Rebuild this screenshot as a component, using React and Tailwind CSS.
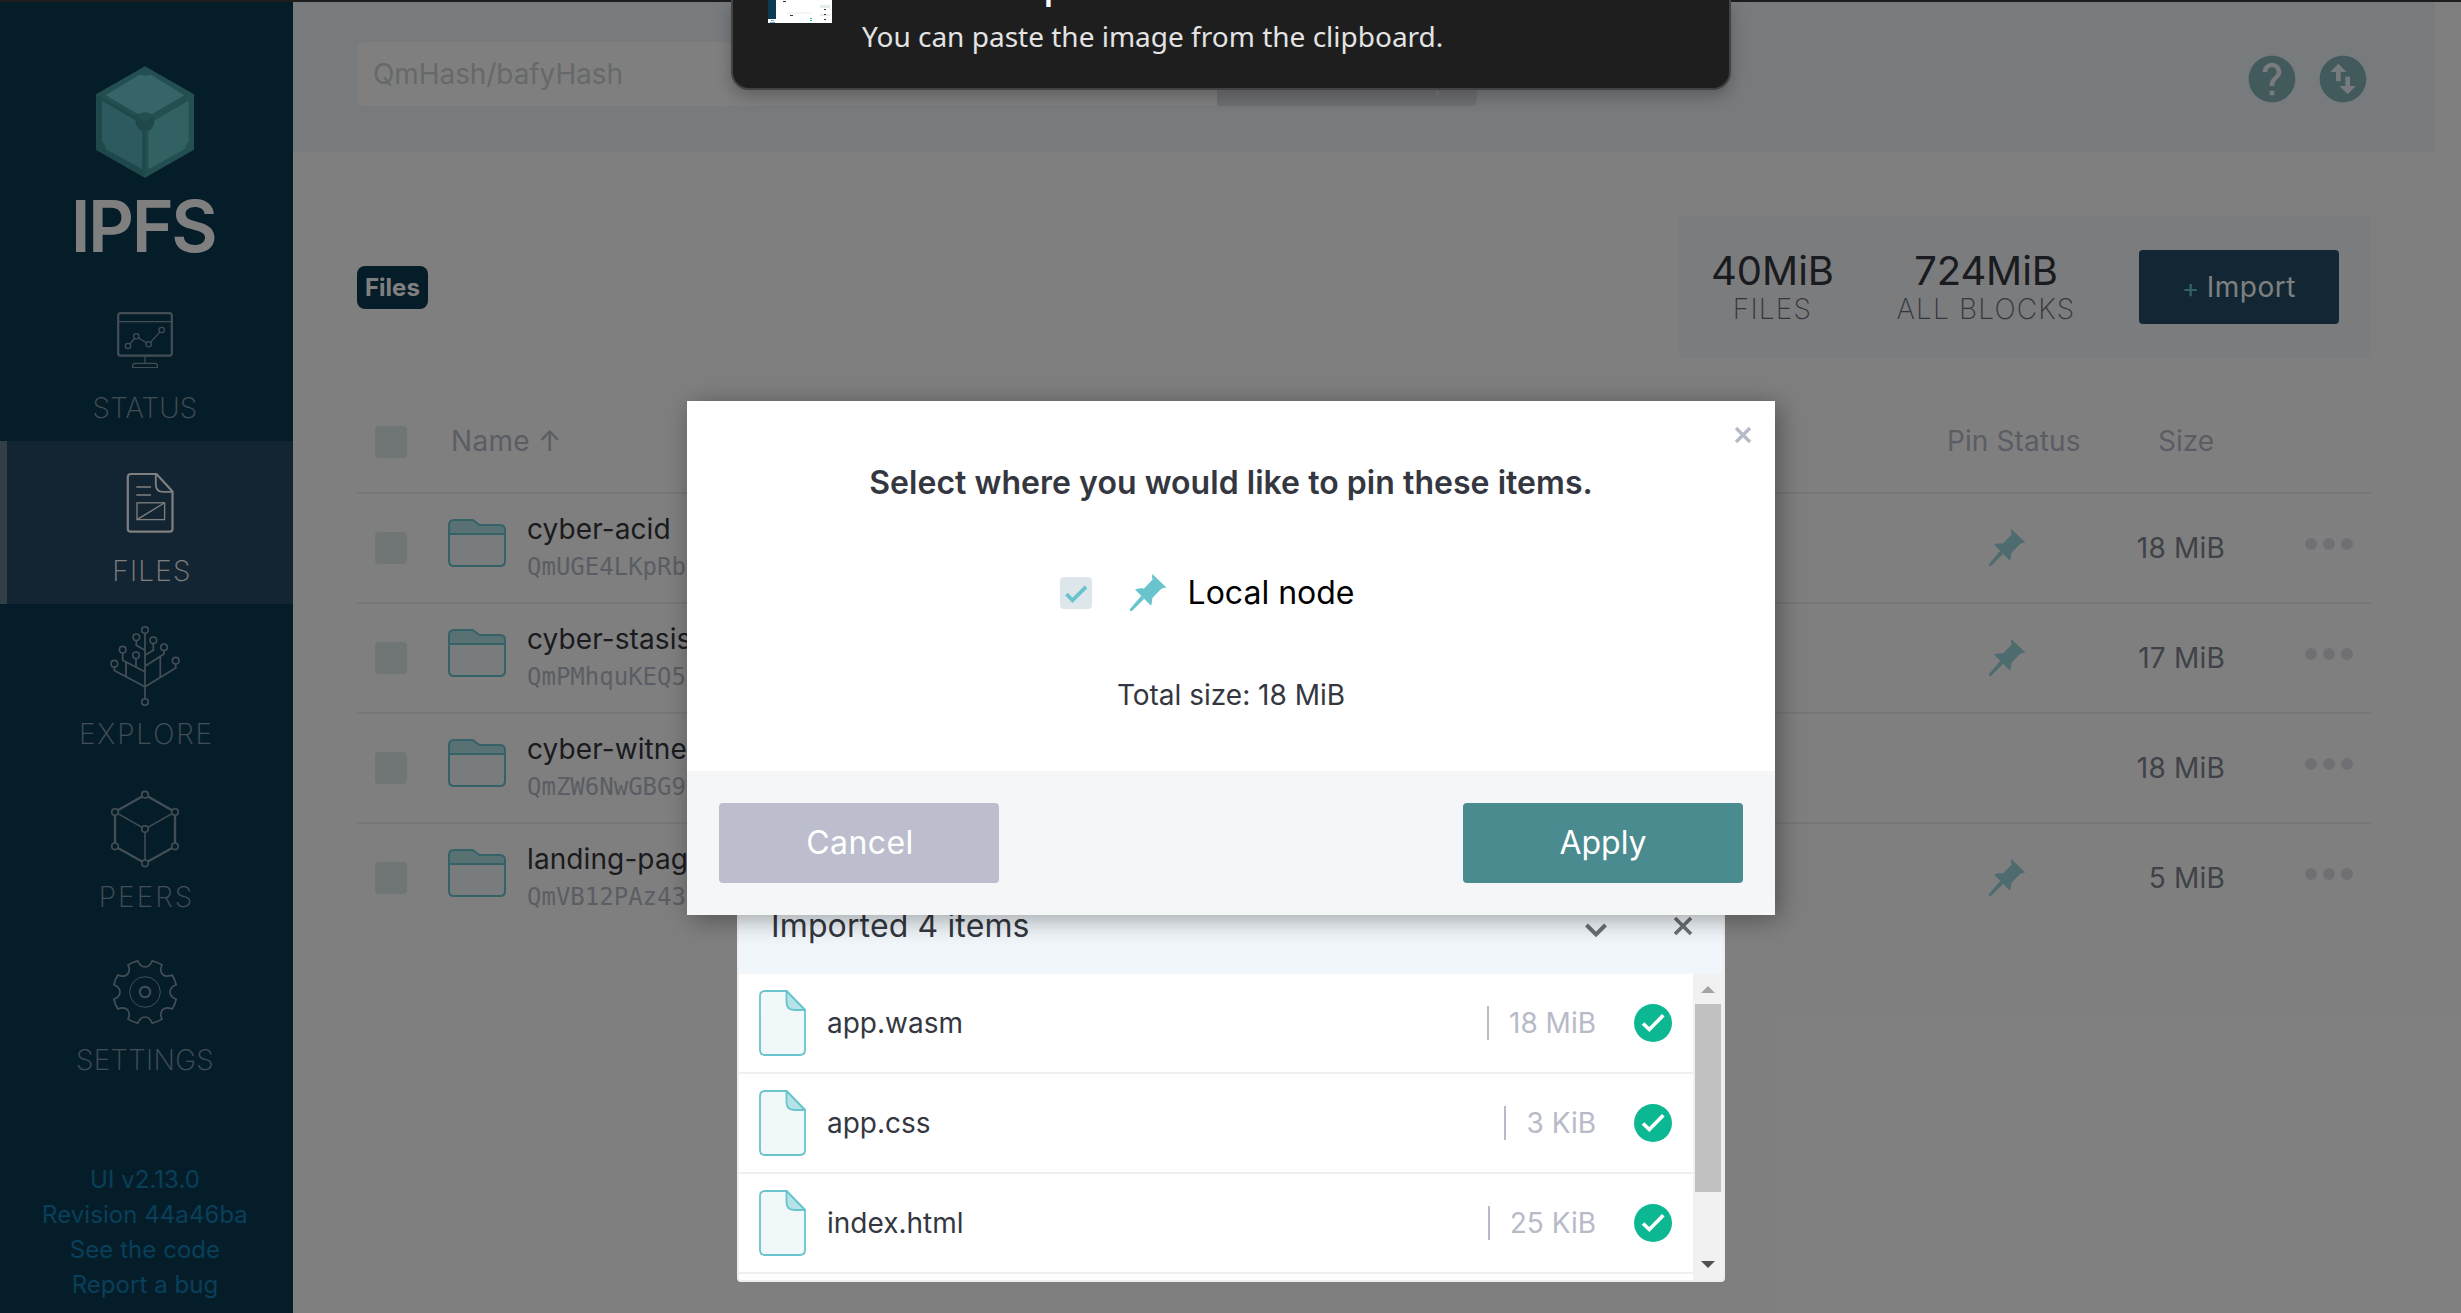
import React from "react";
import { MdHelp, MdSwapVerticalCircle } from "react-icons/md";

const GEAR = (() => {
  const pt = (deg, r) => {
    const a = (deg * Math.PI) / 180;
    return `${(50 + r * Math.sin(a)).toFixed(2)} ${(50 - r * Math.cos(a)).toFixed(2)}`;
  };
  let d = `M${pt(-13, 32)}`;
  for (let k = 0; k < 8; k++) {
    const a = k * 45;
    d += `Q${pt(a - 11, 25.5)} ${pt(a, 25)}Q${pt(a + 11, 25.5)} ${pt(a + 13, 32)}A32 32 0 0 1 ${pt(a + 32, 32)}`;
  }
  return d + "Z";
})();

const iconProps = { viewBox: "0 0 100 100", width: 100, height: 100, fill: "none", stroke: "currentColor" };

function StatusIcon() {
  return (
    <svg {...iconProps} strokeWidth="1.2">
      <rect x="23.2" y="23.1" width="53.6" height="42.6" rx="2.5" strokeWidth="2.2" />
      <path d="M24 31.6H76M50 66.5V73M37.6 77.5V76Q37.6 73.4 40.2 73.4H59.8Q62.4 73.4 62.4 76V77.5Z" />
      <path d="M35 54L39.5 48.5M43.7 48L51.4 52.7M55.6 52.2L64.9 42.2" />
      <circle cx="33" cy="56" r="2.7" />
      <circle cx="41.3" cy="46.3" r="2.7" />
      <circle cx="53.7" cy="54.3" r="2.7" />
      <circle cx="66.7" cy="40" r="2.7" />
    </svg>
  );
}

function FilesIcon() {
  return (
    <svg {...iconProps} strokeWidth="1.3">
      <path d="M55.5 21H29.8Q26.8 21 26.8 24V75.7Q26.8 78.7 29.8 78.7H68.5Q71.5 78.7 71.5 75.7V38.5Z" strokeWidth="2.2" />
      <path d="M54.8 21.5V31.5Q54.8 38.8 62 38.8H71.5" strokeWidth="1.8" />
      <path d="M35.3 34H50M35.3 42H50" />
      <rect x="36" y="49.8" width="27.6" height="16.8" />
      <path d="M36 66.6L63.6 49.8" />
    </svg>
  );
}

const TREE_NODES = [[50, 14], [41.3, 21.3], [58.3, 24.3], [27.7, 33.7], [69, 31.3], [41, 39.3], [19.3, 47.7], [80.7, 44.7], [50, 86]];

function ExploreIcon() {
  return (
    <svg {...iconProps} strokeWidth="1.7">
      <path d="M50 17.4V82.6M41.3 24.7V29.2L50 34.2M58.3 27.7V34.3L50 39.3M27.7 37.1V44.2L50 55.7M69 34.7V38L50 50.2M41 42.7V51M19.3 51.1V54.4L50 70.7L80.7 51.9V48.1M31 45.8V60.4M65.3 40.4V61" />
      {TREE_NODES.map(([x, y]) => (
        <circle key={`${x}-${y}`} cx={x} cy={y} r="3.3" strokeWidth="1.6" />
      ))}
    </svg>
  );
}

const CUBE_NODES = [[50, 15.7], [20, 33], [80, 33], [50, 50], [20, 67.3], [80, 67.3], [50, 84.3]];

function PeersIcon() {
  return (
    <svg {...iconProps}>
      <path d="M47.1 17.4L22.9 31.3M52.9 17.4L77.1 31.3M20 36.4V63.9M80 36.4V63.9M22.9 69L47.1 82.6M77.1 69L52.9 82.6" strokeWidth="2.3" />
      <path d="M22.9 34.7L47.1 48.3M77.1 34.7L52.9 48.3M50 53.4V80.9" strokeWidth="1.5" />
      {CUBE_NODES.map(([x, y]) => (
        <circle key={`${x}-${y}`} cx={x} cy={y} r="3.3" strokeWidth="1.6" />
      ))}
    </svg>
  );
}

function SettingsIcon() {
  return (
    <svg {...iconProps}>
      <path d={GEAR} strokeWidth="1.7" strokeLinejoin="round" />
      <circle cx="50" cy="50" r="15.3" strokeWidth="1" />
      <circle cx="50" cy="50" r="5.2" strokeWidth="2" />
    </svg>
  );
}

function Logo() {
  return (
    <svg viewBox="288 198 294 335" width="98" height="112">
      <path fill="#469ea2" d="M435 198L582 282V449L435 533L288 449V282Z" />
      <path fill="#3e9095" d="M288 282L435 365V533L288 449Z" />
      <path fill="#6acad1" d="M418 224Q435 229 452 224L553 285L455 342Q435 332 415 342L317 285Z" />
      <path fill="#5bb5bf" d="M306 302L407 361Q407 386 427 392V507L318 447Q317 434 306 425Z" />
      <path fill="#64c2c6" d="M566 302L463 361Q463 386 445 392V507L554 447Q555 434 566 425Z" />
      <circle cx="435" cy="365" r="28" fill="#3e9095" />
      <path fill="#469ea2" d="M411 351Q435 326 459 351L435 365Z" />
    </svg>
  );
}

const NAV = [
  { label: "STATUS", Icon: StatusIcon, text: "tracking-[0.15px]" },
  { label: "FILES", Icon: FilesIcon, text: "tracking-[1.2px] pl-0.5", active: true },
  { label: "EXPLORE", Icon: ExploreIcon, text: "tracking-[1.9px] pl-[3px]" },
  { label: "PEERS", Icon: PeersIcon, text: "tracking-[2.1px] pl-[3px]" },
  { label: "SETTINGS", Icon: SettingsIcon, text: "tracking-[0.3px]" },
];

function Sidebar() {
  return (
    <aside className="flex h-full w-[293px] shrink-0 flex-col bg-[#0b3a53] text-white">
      <div className="flex h-[276px] flex-col items-center pr-[3px] pt-16">
        <Logo />
        <div className="mt-[6px] pr-1 text-[71.5px] leading-[84px] font-semibold tracking-[-2.5px]">IPFS</div>
      </div>
      <nav>
        {NAV.map(({ label, Icon, text, active }) => (
          <div
            key={label}
            className={
              active
                ? "flex h-[163px] flex-col items-center border-l-[7px] border-[#657e8c] bg-[#264b66] pt-3 pl-0.5"
                : "flex h-[163px] flex-col items-center pt-3 pr-[3px]"
            }
          >
            <div className={active ? "flex flex-col items-center" : "flex flex-col items-center opacity-50"}>
              <Icon />
              <span className={`mt-px text-[28px] leading-[34px] font-extralight ${text}`}>{label}</span>
            </div>
          </div>
        ))}
      </nav>
      <div className="mt-[69px] pr-[3px] text-center text-2xl leading-[35px] tracking-[0.05px] text-[#117eb3]">
        <div>UI v2.13.0</div>
        <div>Revision 44a46ba</div>
        <div>See the code</div>
        <div>Report a bug</div>
      </div>
    </aside>
  );
}

function Header() {
  return (
    <header className="flex h-[150px] w-[2142px] items-center bg-[#f0f6fa] pl-16">
      <div className="-mt-1.5 flex h-16">
        <div className="flex w-[860px] items-center rounded-l-md bg-white pl-4 text-[28px] tracking-[-0.08px] text-[#ccd2d5]">
          QmHash/bafyHash
        </div>
        <div className="flex w-[260px] items-end rounded-r-md bg-[#dcdee6] pb-[11px] pl-[219px]">
          <span className="h-1 w-[3px] rounded-b-sm bg-white/60" />
        </div>
      </div>
      <div className="mt-[3px] mr-16 ml-auto flex items-center gap-[15px] text-[#84b4b8]">
        <MdHelp size={56} />
        <MdSwapVerticalCircle size={56} />
      </div>
    </header>
  );
}

function Stats() {
  return (
    <div className="flex h-[142px] w-[692px] items-center bg-[#f7f8fa]">
      <div className="flex w-[187px] flex-col items-center pt-[3px]">
        <div className="text-[40px] leading-10 text-[#34373f]">40MiB</div>
        <div className="text-[28px] leading-9 font-extralight tracking-[1.2px] text-[#6a6e7b]">FILES</div>
      </div>
      <div className="flex w-[240px] flex-col items-center pt-[3px]">
        <div className="text-[40px] leading-10 tracking-[-0.1px] text-[#34373f]">724MiB</div>
        <div className="text-[28px] leading-9 font-extralight tracking-[1.2px] text-[#6a6e7b]">ALL BLOCKS</div>
      </div>
      <div className="ml-[33px] flex h-[74px] w-[200px] items-center justify-center rounded bg-[#244e66] text-[28px] tracking-[0.5px] text-white">
        <span className="mr-[7px] text-[26px] text-[#69c4cd]">+</span>Import
      </div>
    </div>
  );
}

function Folder() {
  return (
    <svg viewBox="0 0 58 48" width="58" height="48" stroke="#69c4cd" strokeWidth="2">
      <path fill="#f1f9fa" d="M1 15H57V42Q57 47 52 47H6Q1 47 1 42Z" />
      <path fill="#b5e3e8" d="M1 15V6Q1 1 6 1H24.7L31.5 6H52Q57 6 57 11V15Z" />
    </svg>
  );
}

function Pin() {
  return (
    <svg viewBox="0 0 37 37" width="37" height="37" fill="#69c4cd">
      <path d="M22.3 0L36.4 13.6Q33.5 14 31 15L22.4 24Q22.4 28 21 31.8L5 15.4Q9.500 14 14 14.400L22.600 5.500Q21.600 2.500 22.300 0Z" />
      <path d="M11.300 21.800L14.200 24.800L2 37H0V35Z" />
    </svg>
  );
}

const FILES = [
  { name: "cyber-acid", hash: "QmUGE4LKpRb", size: "18 MiB", pinned: true },
  { name: "cyber-stasis", hash: "QmPMhquKEQ5", size: "17 MiB", pinned: true },
  { name: "cyber-witness", hash: "QmZW6NwGBG9", size: "18 MiB", pinned: false },
  { name: "landing-page", hash: "QmVB12PAz43", size: "5 MiB", pinned: true },
];

function FileTable() {
  return (
    <div className="mt-8 w-[2014px] text-[28px]">
      <div className="flex h-[104px] items-center border-b-2 border-[#eeeeee] pl-[18px] text-[#b7bbc8]">
        <div className="mt-0.5 size-8 rounded bg-[#e1ebed]" />
        <div className="ml-[44px] tracking-[0.3px]">Name ↑</div>
        <div className="ml-auto w-[211px] tracking-[0.1px]">Pin Status</div>
        <div className="w-[213px]">Size</div>
      </div>
      {FILES.map((f, i) => (
        <div
          key={f.name}
          className={
            i === FILES.length - 1
              ? "flex h-[110px] items-center border-b-2 border-transparent pl-[18px]"
              : "flex h-[110px] items-center border-b-2 border-[#eeeeee] pl-[18px]"
          }
        >
          <div className="size-8 rounded bg-[#e1ebed]" />
          <div className="ml-[41px] -mt-2.5">
            <Folder />
          </div>
          <div className="ml-[21px] pb-0.5">
            <div className="leading-10 tracking-[0.1px] text-[#34373f]">{f.name}</div>
            <div className="font-['DejaVu_Sans_Mono',monospace] text-2xl leading-9 text-[#b7bbc8]">{f.hash}</div>
          </div>
          <div className="-mt-0.5 ml-auto w-[100px] opacity-65">{f.pinned && <Pin />}</div>
          <div className="w-[136px] text-right tracking-[0.2px] text-[#7f8491]">{f.size}</div>
          <div className="-mt-2 mr-[18px] ml-[80px] flex gap-[6px]">
            <span className="size-3 rounded-full bg-[#dfe0e6]" />
            <span className="size-3 rounded-full bg-[#dfe0e6]" />
            <span className="size-3 rounded-full bg-[#dfe0e6]" />
          </div>
        </div>
      ))}
    </div>
  );
}

function DocIcon() {
  return (
    <svg viewBox="0 0 47 66" width="47" height="66" stroke="#69c4cd" strokeWidth="1.8" strokeLinejoin="round">
      <path fill="#f0f8fa" d="M27.500 1H6Q1 1 1 6V60Q1 65 6 65H41Q46 65 46 60V20Z" />
      <path fill="#b5e3e8" d="M27.500 1V12Q27.500 20 35.500 20H46Z" />
    </svg>
  );
}

const IMPORTS = [
  { name: "app.wasm", size: "18 MiB" },
  { name: "app.css", size: "3 KiB" },
  { name: "index.html", size: "25 KiB" },
];

function ImportPanel() {
  return (
    <section className="absolute top-[874px] left-[737px] flex h-[408px] w-[988px] flex-col overflow-hidden rounded border-2 border-[#eeeeee] bg-white text-[28px]">
      <div className="flex h-[98px] shrink-0 items-center bg-[#f0f6fa] pt-px pl-8 text-[32px] tracking-[0.13px] text-[#34373f]">
        Imported 4 items
        <svg className="mt-2 ml-auto" width="24" height="18" viewBox="0 0 24 18" fill="none" stroke="#6a6f75" strokeWidth="4">
          <path d="M2.500 4L12 13.500L21.500 4" />
        </svg>
        <svg className="mr-[30px] ml-[65px]" width="20" height="20" viewBox="0 0 20 20" fill="none" stroke="#6a6f75" strokeWidth="3.6">
          <path d="M2 2L18 18M18 2L2 18" />
        </svg>
      </div>
      <div className="flex min-h-0 flex-1">
        <div className="min-w-0 flex-1 overflow-hidden">
          {IMPORTS.map((f) => (
            <div key={f.name} className="flex h-[100px] items-center border-b-2 border-[#eeeeee] pl-[20px]">
              <DocIcon />
              <div className="ml-[21px] text-[#34373f]">{f.name}</div>
              <div className="ml-auto flex h-[34px] items-center border-l-2 border-[#b7bbc8] pl-5 text-[#b7bbc8]">{f.size}</div>
              <svg className="mr-[21px] ml-[38px]" width="38" height="38" viewBox="-19 -19 38 38">
                <circle r="19" fill="#0cb892" />
                <path d="M-10 0.500L-3.700 6.500L10.300 -7.700" fill="none" stroke="#fff" strokeWidth="3.700" />
              </svg>
            </div>
          ))}
        </div>
        <div className="flex w-[30px] flex-col items-center bg-[#f1f1f1]">
          <svg className="mt-3" width="14" height="7" viewBox="0 0 14 7">
            <path d="M7 0L14 7H0Z" fill="#a3a3a3" />
          </svg>
          <div className="mt-[11px] h-[188px] w-[26px] bg-[#c1c1c1]" />
          <svg className="mt-auto mb-3" width="14" height="7" viewBox="0 0 14 7">
            <path d="M0 0H14L7 7Z" fill="#505050" />
          </svg>
        </div>
      </div>
    </section>
  );
}

function PinModal() {
  return (
    <section className="absolute top-[401px] left-[687px] flex h-[514px] w-[1088px] flex-col bg-white shadow-[4px_4px_24px_rgba(0,0,0,0.36)]">
      <svg className="absolute top-[25px] right-[23px]" width="18" height="18" viewBox="0 0 18 18" fill="none" stroke="#b7bbc8" strokeWidth="3.400">
        <path d="M2 2L16 16M16 2L2 16" />
      </svg>
      <div className="flex h-[370px] flex-col items-center pt-[61px]">
        <h2 className="text-[32px] leading-[42px] font-semibold tracking-[0.04px] text-[#34373f]">
          Select where you would like to pin these items.
        </h2>
        <div className="mt-[68px] mr-[48px] flex h-10 items-center text-[32px] text-black">
          <svg className="mr-[38px] mt-0.5" width="32" height="32" viewBox="0 0 32 32">
            <rect width="32" height="32" rx="4" fill="#dde6eb" />
            <path d="M6.500 17L12.500 23.300L26 9.800" fill="none" stroke="#69c4cd" strokeWidth="3.800" />
          </svg>
          <Pin />
          <span className="ml-[21px] pt-px">Local node</span>
        </div>
        <div className="mt-[63px] text-[28px] leading-10 text-[#34373f]">Total size: 18 MiB</div>
      </div>
      <div className="flex flex-1 items-center justify-between bg-[#f4f6f8] px-8 text-[32px] text-white">
        <button className="h-20 w-[280px] rounded bg-[#bcbecd] pl-0.5 tracking-[0.4px]">Cancel</button>
        <button className="h-20 w-[280px] rounded bg-[#4a8b8f]">Apply</button>
      </div>
    </section>
  );
}

function Notification() {
  return (
    <div className="absolute top-0 left-[731px] h-[90px] w-[1000px] overflow-hidden rounded-b-[18px] border-2 border-t-0 border-[#434343] bg-[#1e1e1e] font-['Noto_Sans',sans-serif] text-[28px] shadow-[0_6px_16px_rgba(0,0,0,0.25)]">
      <div className="flex">
        <svg className="ml-[35px]" width="64" height="23" viewBox="0 0 64 23">
          <path fill="#fff" d="M0 0H64V23H0Z" />
          <path fill="#0b3a53" d="M0 0H8V19H0Z" />
          <path fill="#f0f6fa" d="M19 12H43V14H19Z" />
          <path fill="#e6ebee" d="M52 5H62V8H52ZM52 14H62V16H52Z" />
          <path fill="#333" d="M15 1H18V2H15ZM22 15H25V16H22ZM56 9H58V10H56ZM56 14H58V15H56ZM56 19H58V20H56Z" />
          <path fill="#0cb892" d="M42 18H44V19H42ZM42 20H44V21H42Z" />
          <path fill="#69a9cd" d="M3 20H6V21H3ZM2 22H7V23H2Z" />
        </svg>
        <div className="ml-[30px]">
          <div className="-mt-[31px] h-10 leading-10 font-bold tracking-[-0.9px] text-white">Screenshot captured</div>
          <div className="mt-[7px] leading-10 text-[#e3e3e3]">You can paste the image from the clipboard.</div>
        </div>
      </div>
    </div>
  );
}

export default function App() {
  return (
    <div className="relative flex h-[1313px] w-[2461px] flex-col overflow-hidden bg-white font-['Inter',sans-serif]">
      <div className="h-0.5 shrink-0 bg-[#1d1d1d]" />
      <div className="flex min-h-0 flex-1">
        <Sidebar />
        <main className="flex-1">
          <Header />
          <div className="pt-16 pl-16">
            <div className="flex h-[142px] w-[2014px] items-center justify-between">
              <div className="flex h-[43px] items-center rounded-lg bg-[#0b3a53] px-2 pt-px text-2xl font-bold text-white">Files</div>
              <Stats />
            </div>
            <FileTable />
          </div>
        </main>
      </div>
      <div className="absolute inset-x-0 top-0.5 bottom-0 bg-black/50" />
      <ImportPanel />
      <PinModal />
      <Notification />
    </div>
  );
}
